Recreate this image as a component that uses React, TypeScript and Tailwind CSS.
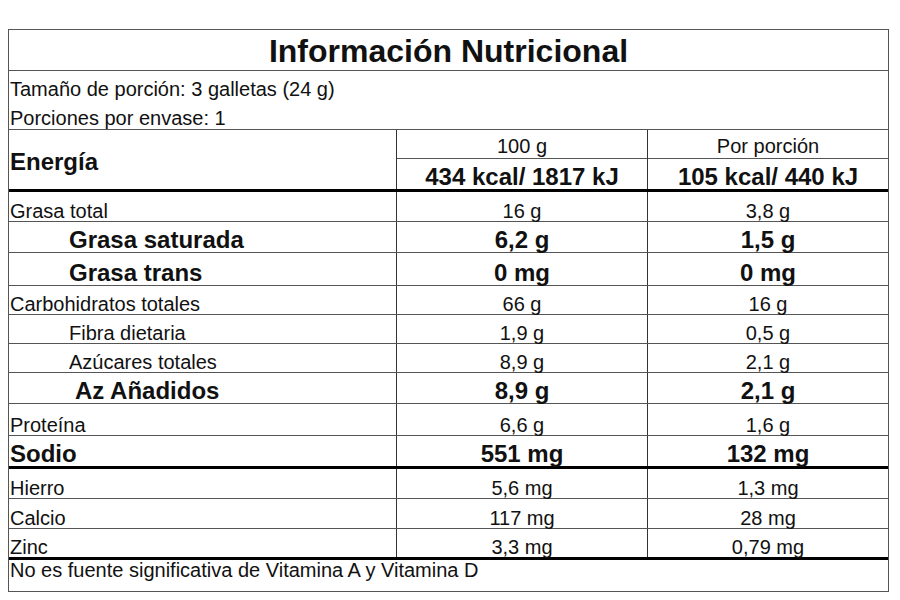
import React from "react";

type Row = {
  label: string;
  a: string;
  b: string;
  bold?: boolean;
  indent?: string;
  h: string;
  thick?: boolean;
};

const rows: Row[] = [
  { label: "Grasa total", a: "16 g", b: "3,8 g", h: "h-[30px]" },
  { label: "Grasa saturada", a: "6,2 g", b: "1,5 g", bold: true, indent: "pl-[60px]", h: "h-[31px]" },
  { label: "Grasa trans", a: "0 mg", b: "0 mg", bold: true, indent: "pl-[60px]", h: "h-[33px]" },
  { label: "Carbohidratos totales", a: "66 g", b: "16 g", h: "h-[29px]" },
  { label: "Fibra dietaria", a: "1,9 g", b: "0,5 g", indent: "pl-[60px]", h: "h-[29px]" },
  { label: "Azúcares totales", a: "8,9 g", b: "2,1 g", indent: "pl-[60px]", h: "h-[29px]" },
  { label: "Az Añadidos", a: "8,9 g", b: "2,1 g", bold: true, indent: "pl-[66px]", h: "h-[31px]" },
  { label: "Proteína", a: "6,6 g", b: "1,6 g", h: "h-[32px]" },
  { label: "Sodio", a: "551 mg", b: "132 mg", bold: true, h: "h-[33px]", thick: true },
  { label: "Hierro", a: "5,6 mg", b: "1,3 mg", h: "h-[30px]" },
  { label: "Calcio", a: "117 mg", b: "28 mg", h: "h-[30px]" },
  { label: "Zinc", a: "3,3 mg", b: "0,79 mg", h: "h-[31px]", thick: true },
];

function NutrientRow({ row }: { row: Row }) {
  const text = row.bold ? "text-[24px] font-bold" : "text-[20px]";
  const line = row.thick ? "border-b-[3px] border-black" : "border-b border-[#555]";
  return (
    <div className={`grid grid-cols-[387px_251px_1fr] ${row.h} ${line}`}>
      <div className={`flex items-end leading-none ${row.indent ?? "pl-px"} ${text}`}>
        {row.label}
      </div>
      <div className={`flex items-end justify-center leading-none border-l border-[#333] ${text}`}>
        {row.a}
      </div>
      <div className={`flex items-end justify-center leading-none border-l border-[#333] ${text}`}>
        {row.b}
      </div>
    </div>
  );
}

export default function App() {
  return (
    <div
      className="w-[900px] h-[600px] bg-white pt-[29px] pl-[8px] text-[#111]"
      style={{ fontFamily: '"Liberation Sans", Arial, sans-serif' }}
    >
      <div className="w-[881px] border border-[#555]">
        <div className="h-[41px] border-b border-[#555] flex items-center justify-center">
          <h1 className="text-[32px] font-bold leading-none pt-[2px]">Información Nutricional</h1>
        </div>
        <div className="h-[30px] flex items-end text-[20px] leading-none pl-px pb-[2px]">
          Tamaño de porción: 3 galletas (24 g)
        </div>
        <div className="h-[29px] border-b border-[#555] flex items-end text-[20px] leading-none pl-px pb-[1px]">
          Porciones por envase: 1
        </div>

        <div className="grid grid-cols-[387px_251px_1fr] h-[62px] border-b-[3px] border-black">
          <div className="flex items-center text-[24px] font-bold leading-none pl-px pt-[5px]">Energía</div>
          <div className="flex flex-col border-l border-[#333]">
            <div className="h-[29px] border-b border-[#555] flex items-end justify-center text-[20px] leading-none pb-[2px]">
              100 g
            </div>
            <div className="flex-1 flex items-end justify-center text-[24px] font-bold leading-none">
              434 kcal/ 1817 kJ
            </div>
          </div>
          <div className="flex flex-col border-l border-[#333]">
            <div className="h-[29px] border-b border-[#555] flex items-end justify-center text-[20px] leading-none pb-[2px]">
              Por porción
            </div>
            <div className="flex-1 flex items-end justify-center text-[24px] font-bold leading-none">
              105 kcal/ 440 kJ
            </div>
          </div>
        </div>

        {rows.map((r) => (
          <NutrientRow key={r.label} row={r} />
        ))}

        <div className="h-[31px] flex items-end text-[20px] leading-none pl-px pb-[11px]">
          No es fuente significativa de Vitamina A y Vitamina D
        </div>
      </div>
    </div>
  );
}
